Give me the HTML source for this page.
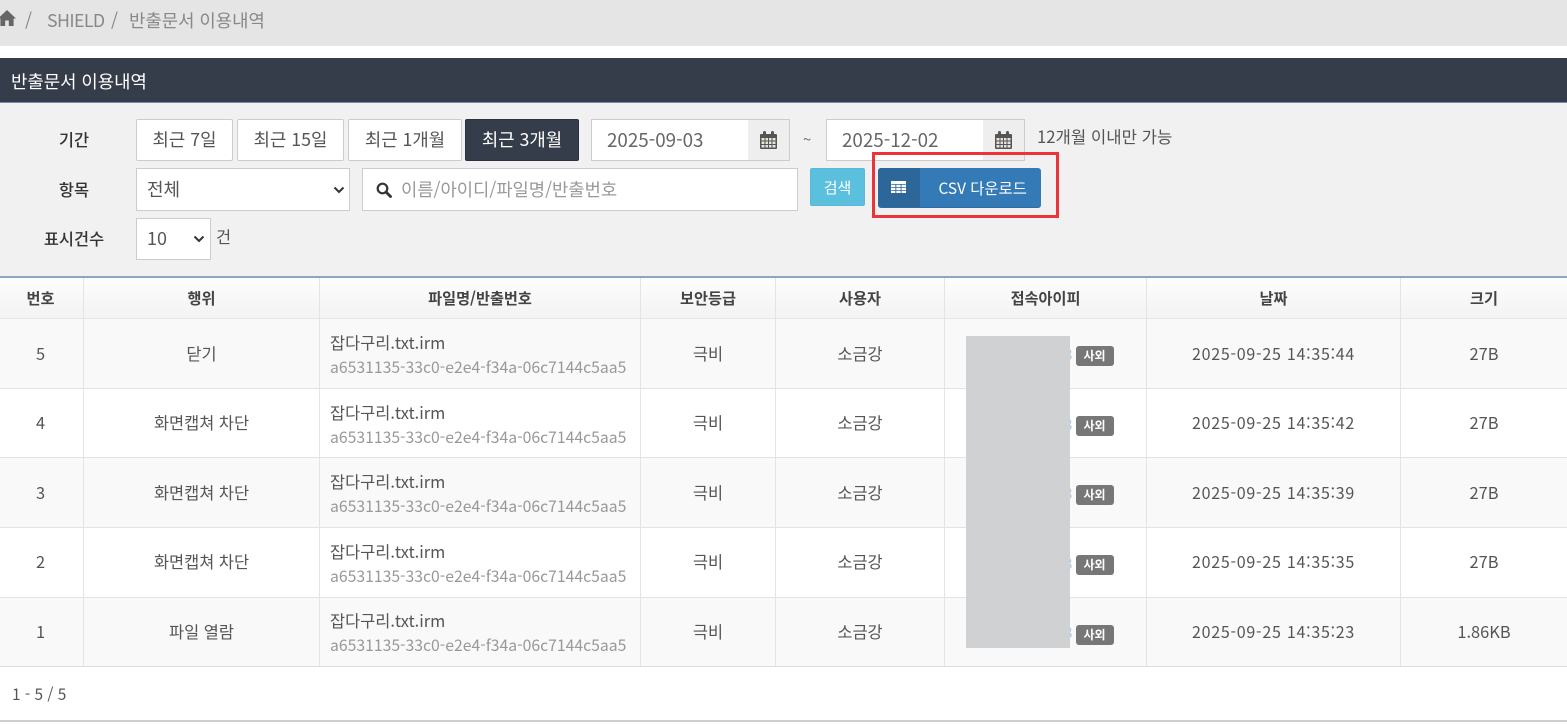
<!DOCTYPE html>
<html lang="ko"><head><meta charset="utf-8"><title>반출문서 이용내역</title>
<style>
html,body{margin:0;padding:0;width:1567px;height:726px;overflow:hidden;background:#fff}
body{position:relative;font-family:"Noto Sans CJK KR","Liberation Sans",sans-serif;font-size:15px;color:#555}
.a,.t,.c,.d{position:absolute;box-sizing:border-box;white-space:nowrap}
.t{line-height:20px}
.c{text-align:center;line-height:20px;color:#555;font-size:16.4px;margin-top:-1px}
.d{text-align:center;line-height:20px;color:#555;font-size:16.4px;margin-top:-1px}
.dt{font-size:16px;letter-spacing:.75px}
.btn{position:absolute;box-sizing:border-box;height:42px;top:118.5px;background:#fff;border:1px solid #ccc;border-radius:2px;text-align:center;line-height:39px;font-size:17.8px;color:#555;white-space:nowrap}
.inp{position:absolute;box-sizing:border-box;background:#fff;border:1px solid #ccc;font-size:16px;color:#666;white-space:nowrap}
.add{position:absolute;box-sizing:border-box;background:#eee;border:1px solid #ccc;border-left:0;top:118.5px;height:42px;width:42px}
.lab{position:absolute;font-weight:500;font-size:16.4px;color:#333;line-height:20px;text-align:center;white-space:nowrap;margin-top:-1px}
.row{position:absolute;left:0;width:1567px;box-sizing:border-box;border-bottom:1px solid #e3e3e3}
.v{position:absolute;top:278px;height:388px;width:1px;background:#e4e4e4}
.hd{position:absolute;top:287.5px;line-height:20px;text-align:center;font-size:15.2px;font-weight:700;color:#444;white-space:nowrap}
.f{position:absolute;left:330px;line-height:20px;font-size:16.4px;color:#555;white-space:nowrap}
.h{position:absolute;left:330px;line-height:20px;font-size:15.75px;color:#999;white-space:nowrap;margin-top:-1px}
.b{position:absolute;left:1075.5px;width:38px;height:20px;background:#777;border-radius:3px;color:#fff;text-align:center;font-size:12px;font-weight:700;line-height:19px}
.x{position:absolute;left:1064px;font-size:15px;line-height:20px;color:#a9c9e4}
</style></head><body>

<div class="a" style="left:0;top:0;width:1567px;height:46px;background:#e5e5e5"></div>
<svg class="a" style="left:-3px;top:9px" width="20" height="18" viewBox="0 0 20 18"><path fill="#666" d="M10 1 L19 9.5 L16.6 9.5 L16.6 17 L11.8 17 L11.8 11.5 L8.2 11.5 L8.2 17 L3.4 17 L3.4 9.5 L1 9.5 Z"/></svg>
<div class="t" style="left:25px;top:10px;font-size:17.8px;color:#888">/</div>
<div class="t" style="left:47px;top:10px;font-size:17.8px;color:#888;letter-spacing:-.6px">SHIELD</div>
<div class="t" style="left:111px;top:10px;font-size:17.8px;color:#888">/</div>
<div class="t" style="left:129px;top:10px;font-size:17.8px;color:#888">반출문서 이용내역</div>

<div class="a" style="left:0;top:58px;width:1567px;height:45px;background:#353c4a;border-bottom:1px solid #6f8db5"></div>
<div class="t" style="left:11px;top:71px;font-size:17.8px;color:#fff">반출문서 이용내역</div>

<div class="a" style="left:0;top:103px;width:1567px;height:173px;background:#f1f1f1"></div>

<div class="lab" style="left:44px;width:60px;top:130px">기간</div>
<div class="btn" style="left:136px;width:97px">최근 7일</div>
<div class="btn" style="left:237px;width:107px">최근 15일</div>
<div class="btn" style="left:348px;width:114px">최근 1개월</div>
<div class="btn" style="left:465px;width:114px;background:#353c4a;border-color:#2b3140;color:#fff">최근 3개월</div>

<div class="inp" style="left:591px;top:118.5px;width:157px;height:42px;border-right:0;padding-left:15px;line-height:39px;font-size:18.8px;color:#666">2025-09-03</div>
<div class="add" style="left:748px"><svg style="position:absolute;left:12px;top:11px" width="17" height="18" viewBox="0 0 17 18"><path fill="#555" d="M1 3h2V1.5a1.5 1.5 0 0 1 3 0V3h5V1.5a1.5 1.5 0 0 1 3 0V3h2a1 1 0 0 1 1 1v13a1 1 0 0 1-1 1H1a1 1 0 0 1-1-1V4a1 1 0 0 1 1-1z"/><path fill="#e8e2d8" d="M1.5 7h3v2.5h-3zM5.5 7h2.5v2.5H5.5zM9 7h2.5v2.5H9zM12.5 7h3v2.5h-3zM1.5 10.5h3V13h-3zM5.5 10.5h2.5V13H5.5zM9 10.5h2.5V13H9zM12.5 10.5h3V13h-3zM1.5 14h3v2.5h-3zM5.5 14h2.5v2.5H5.5zM9 14h2.5v2.5H9zM12.5 14h3v2.5h-3z"/></svg></div>
<div class="t" style="left:803px;top:130px;font-size:15px;color:#666">~</div>
<div class="inp" style="left:826px;top:118.5px;width:157px;height:42px;border-right:0;padding-left:15px;line-height:39px;font-size:18.8px;color:#666">2025-12-02</div>
<div class="add" style="left:983px"><svg style="position:absolute;left:12px;top:11px" width="17" height="18" viewBox="0 0 17 18"><path fill="#555" d="M1 3h2V1.5a1.5 1.5 0 0 1 3 0V3h5V1.5a1.5 1.5 0 0 1 3 0V3h2a1 1 0 0 1 1 1v13a1 1 0 0 1-1 1H1a1 1 0 0 1-1-1V4a1 1 0 0 1 1-1z"/><path fill="#e8e2d8" d="M1.5 7h3v2.5h-3zM5.5 7h2.5v2.5H5.5zM9 7h2.5v2.5H9zM12.5 7h3v2.5h-3zM1.5 10.5h3V13h-3zM5.5 10.5h2.5V13H5.5zM9 10.5h2.5V13H9zM12.5 10.5h3V13h-3zM1.5 14h3v2.5h-3zM5.5 14h2.5v2.5H5.5zM9 14h2.5v2.5H9zM12.5 14h3v2.5h-3z"/></svg></div>
<div class="t" style="left:1037px;top:126px;font-size:16.7px;color:#555">12개월 이내만 가능</div>

<div class="lab" style="left:44px;width:60px;top:180px">항목</div>
<div class="inp" style="left:136px;top:168px;width:214px;height:43px;padding-left:10px;line-height:41px;font-size:18px;color:#555">전체</div>
<svg class="a" style="left:333px;top:186px" width="12" height="8" viewBox="0 0 12 8"><path d="M1.5 1.5 L6 6 L10.5 1.5" fill="none" stroke="#333" stroke-width="2"/></svg>
<div class="inp" style="left:362px;top:168px;width:436px;height:43px;padding-left:38px;line-height:41px;font-size:17.7px;color:#999">이름/아이디/파일명/반출번호</div>
<svg class="a" style="left:376px;top:182px" width="16" height="16" viewBox="0 0 16 16"><circle cx="6.5" cy="6.5" r="4.8" fill="none" stroke="#333" stroke-width="2.2"/><path d="M10 10 L14.5 14.5" stroke="#333" stroke-width="2.8" stroke-linecap="round"/></svg>

<div class="a" style="left:810px;top:168px;width:55px;height:38px;background:#5bc0de;border:1px solid #5bb8d8;border-radius:2px;color:#fff;text-align:center;line-height:38px;font-size:15px">검색</div>
<div class="a" style="left:877.5px;top:168px;width:163px;height:40px;background:#337ab7;border-bottom:1px solid #2e6da4;border-radius:3px;color:#fff;line-height:40px;font-size:15.4px;overflow:hidden">
  <div class="a" style="left:0;top:0;width:42px;height:40px;background:#2d6699"></div>
  <svg class="a" style="left:13px;top:13px" width="15" height="12" viewBox="0 0 15 12"><path fill="#fff" d="M0 0h15v12H0z"/><path fill="#2d6699" d="M.2 3h14.6v.8H.2zM.2 6h14.6v.8H.2zM.2 9h14.6v.8H.2zM4.4 3h.9v9h-.9zM9.6 3h.9v9h-.9z"/></svg>
  <div class="a" style="left:61px;top:0">CSV 다운로드</div>
</div>
<div class="a" style="left:872px;top:152px;width:187px;height:66px;border:3px solid #ee3338"></div>

<div class="lab" style="left:34px;width:80px;top:229px">표시건수</div>
<div class="inp" style="left:136px;top:218px;width:75px;height:42px;padding-left:10px;line-height:39px;font-size:18px;color:#555">10</div>
<svg class="a" style="left:193px;top:235px" width="12" height="8" viewBox="0 0 12 8"><path d="M1.5 1.5 L6 6 L10.5 1.5" fill="none" stroke="#333" stroke-width="2"/></svg>
<div class="t" style="left:216px;top:226px;font-size:16.4px;color:#555">건</div>

<!-- table -->
<div class="a" style="left:0;top:276px;width:1567px;height:2px;background:#8fa3c3"></div>
<div class="row" style="top:278px;height:41px;background:linear-gradient(#fdfdfd,#f3f3f3);border-bottom:1.5px solid #e5e5e5"></div>
<div class="row" style="top:319px;height:69.5px;background:#f9f9f9"></div>
<div class="row" style="top:388.5px;height:69.5px;background:#fff"></div>
<div class="row" style="top:458px;height:69.5px;background:#f9f9f9"></div>
<div class="row" style="top:527.5px;height:70px;background:#fff"></div>
<div class="row" style="top:597.5px;height:69.5px;background:#f9f9f9;border-bottom:1.5px solid #ddd"></div>

<div class="v" style="left:83px"></div><div class="v" style="left:319px"></div><div class="v" style="left:640px"></div><div class="v" style="left:775px"></div><div class="v" style="left:944px"></div><div class="v" style="left:1146px"></div><div class="v" style="left:1400px"></div>

<div class="hd" style="left:0;width:81px">번호</div>
<div class="hd" style="left:84px;width:235px">행위</div>
<div class="hd" style="left:320px;width:320px">파일명/반출번호</div>
<div class="hd" style="left:641px;width:134px">보안등급</div>
<div class="hd" style="left:776px;width:168px">사용자</div>
<div class="hd" style="left:945px;width:201px">접속아이피</div>
<div class="hd" style="left:1147px;width:253px">날짜</div>
<div class="hd" style="left:1401px;width:166px">크기</div>

<!-- row 5 -->
<div class="c" style="left:0;width:81px;top:344px">5</div>
<div class="c" style="left:84px;width:235px;top:344px">닫기</div>
<div class="f" style="top:332px">잡다구리.txt.irm</div>
<div class="h" style="top:358px">a6531135-33c0-e2e4-f34a-06c7144c5aa5</div>
<div class="c" style="left:641px;width:134px;top:344px">극비</div>
<div class="c" style="left:776px;width:168px;top:344px">소금강</div>
<div class="x" style="top:345px">8</div>
<div class="b" style="top:346px">사외</div>
<div class="d dt" style="left:1147px;width:253px;top:344px">2025-09-25 14:35:44</div>
<div class="d" style="left:1401px;width:166px;top:344px">27B</div>

<!-- row 4 -->
<div class="c" style="left:0;width:81px;top:413px">4</div>
<div class="c" style="left:84px;width:235px;top:413px">화면캡쳐 차단</div>
<div class="f" style="top:402px">잡다구리.txt.irm</div>
<div class="h" style="top:428px">a6531135-33c0-e2e4-f34a-06c7144c5aa5</div>
<div class="c" style="left:641px;width:134px;top:413px">극비</div>
<div class="c" style="left:776px;width:168px;top:413px">소금강</div>
<div class="x" style="top:415px">8</div>
<div class="b" style="top:415.5px">사외</div>
<div class="d dt" style="left:1147px;width:253px;top:413px">2025-09-25 14:35:42</div>
<div class="d" style="left:1401px;width:166px;top:413px">27B</div>

<!-- row 3 -->
<div class="c" style="left:0;width:81px;top:483px">3</div>
<div class="c" style="left:84px;width:235px;top:483px">화면캡쳐 차단</div>
<div class="f" style="top:471px">잡다구리.txt.irm</div>
<div class="h" style="top:497px">a6531135-33c0-e2e4-f34a-06c7144c5aa5</div>
<div class="c" style="left:641px;width:134px;top:483px">극비</div>
<div class="c" style="left:776px;width:168px;top:483px">소금강</div>
<div class="x" style="top:484px">8</div>
<div class="b" style="top:485px">사외</div>
<div class="d dt" style="left:1147px;width:253px;top:483px">2025-09-25 14:35:39</div>
<div class="d" style="left:1401px;width:166px;top:483px">27B</div>

<!-- row 2 -->
<div class="c" style="left:0;width:81px;top:552px">2</div>
<div class="c" style="left:84px;width:235px;top:552px">화면캡쳐 차단</div>
<div class="f" style="top:541px">잡다구리.txt.irm</div>
<div class="h" style="top:567px">a6531135-33c0-e2e4-f34a-06c7144c5aa5</div>
<div class="c" style="left:641px;width:134px;top:552px">극비</div>
<div class="c" style="left:776px;width:168px;top:552px">소금강</div>
<div class="x" style="top:554px">8</div>
<div class="b" style="top:554.5px">사외</div>
<div class="d dt" style="left:1147px;width:253px;top:552px">2025-09-25 14:35:35</div>
<div class="d" style="left:1401px;width:166px;top:552px">27B</div>

<!-- row 1 -->
<div class="c" style="left:0;width:81px;top:622px">1</div>
<div class="c" style="left:84px;width:235px;top:622px">파일 열람</div>
<div class="f" style="top:610px">잡다구리.txt.irm</div>
<div class="h" style="top:636px">a6531135-33c0-e2e4-f34a-06c7144c5aa5</div>
<div class="c" style="left:641px;width:134px;top:622px">극비</div>
<div class="c" style="left:776px;width:168px;top:622px">소금강</div>
<div class="x" style="top:623px">8</div>
<div class="b" style="top:624.5px">사외</div>
<div class="d dt" style="left:1147px;width:253px;top:622px">2025-09-25 14:35:23</div>
<div class="d" style="left:1401px;width:166px;top:622px">1.86KB</div>

<div class="a" style="left:965.5px;top:335.5px;width:104.5px;height:312.5px;background:#d0d1d3"></div>

<div class="t" style="left:12px;top:684px;font-size:15.4px;color:#555">1 - 5 / 5</div>
<div class="a" style="left:0;top:720px;width:1567px;height:2px;background:#cfcfcf"></div>
</body></html>
